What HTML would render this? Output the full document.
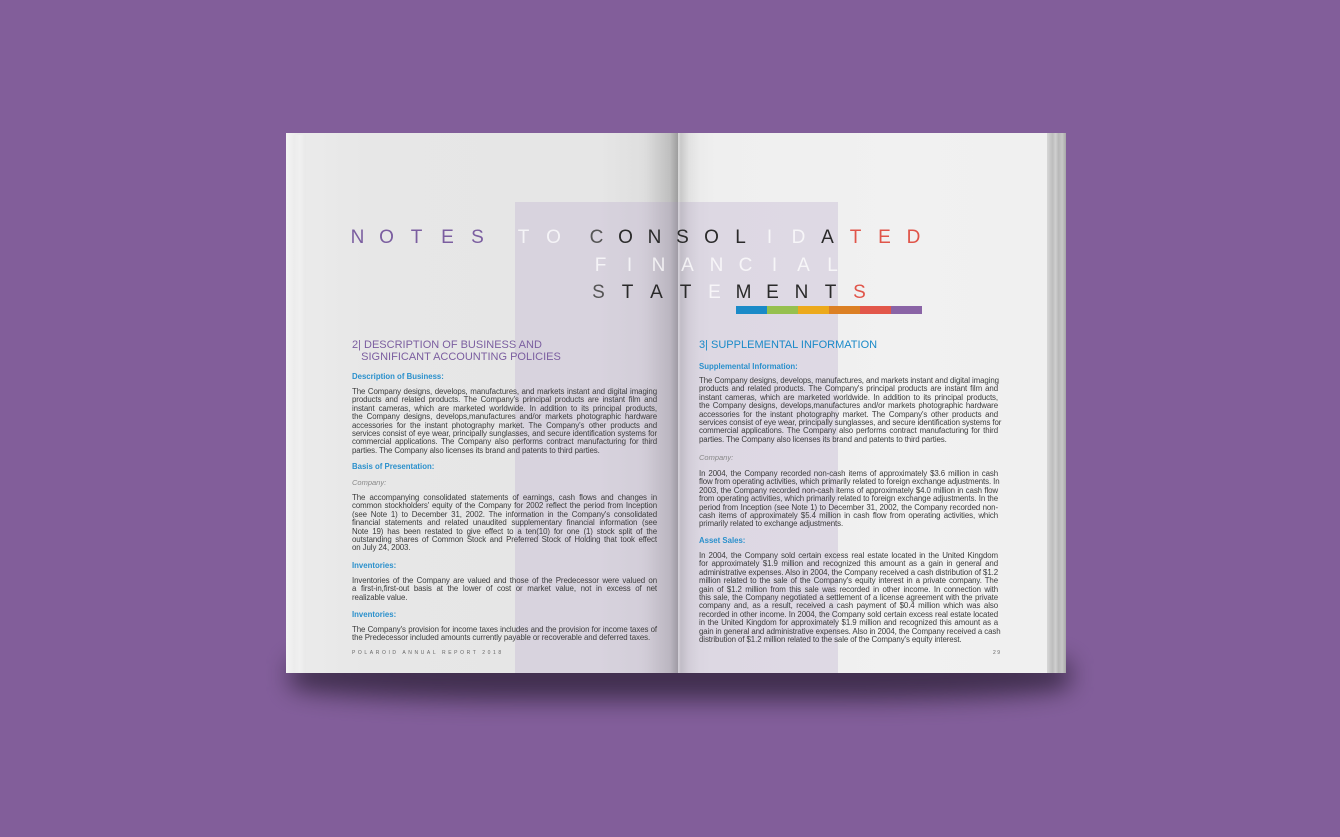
<!DOCTYPE html>
<html><head><meta charset="utf-8">
<style>
*{margin:0;padding:0;box-sizing:border-box}
html,body{width:1340px;height:837px;overflow:hidden;background:#825e9a;font-family:"Liberation Sans",sans-serif}
.abs{position:absolute}
.shadow{position:absolute;left:290px;top:650px;width:780px;height:50px;background:#3a2a47;filter:blur(12px);border-radius:30%;opacity:.9}
.lp{position:absolute;left:286px;top:133px;width:392px;height:540px;background:linear-gradient(90deg,#f3f3f3 0,#ebebeb 3%,#e7e7e7 20%,#e6e6e6 80%,#dedede 92%,#c9c9c9 98%,#b5b5b5 100%)}
.rp{position:absolute;left:678px;top:133px;width:370px;height:540px;background:linear-gradient(90deg,#cfcfcf 0,#e9e9e9 3%,#efefef 10%,#f1f1f1 60%,#f0f0f0 100%)}
.edge{position:absolute;left:1047px;top:133px;width:19px;height:540px;background:linear-gradient(90deg,#d6d6d6,#bdbdbd 30%,#d0d0d0 45%,#b8b8b8 60%,#c6c6c6 80%,#a8a8a8)}
.ledge{position:absolute;left:286px;top:135px;width:20px;height:538px;background:linear-gradient(90deg,#f5f5f5,#ececec 40%,#f0f0f0 70%,#e8e8e8)}
.band{position:absolute;left:515px;top:202px;width:323px;height:471px;background:rgba(190,175,205,.35)}
.spine{position:absolute;left:640px;top:133px;width:60px;height:540px;background:linear-gradient(90deg,rgba(0,0,0,0),rgba(0,0,0,.05) 50%,rgba(0,0,0,.13) 63%,rgba(255,255,255,.3) 64%,rgba(0,0,0,.06) 68%,rgba(0,0,0,0))}
.t{position:absolute;font-size:19px;line-height:20px;width:29px;text-align:center;letter-spacing:0}
.p{color:#7b5ea0}.k{color:#2a2a2a}.g{color:#555}.w{color:rgba(255,255,255,.75)}.r{color:#e0554a}
.l{position:absolute;font-size:7.9px;line-height:8px;color:#3c3c3c;white-space:nowrap;text-align:justify;text-align-last:justify;letter-spacing:-0.1px}
.L{left:352px;width:305px}.R{left:699px;width:299px}
.n{text-align-last:left}
.h{position:absolute;font-size:7.8px;font-weight:bold;color:#2a90cc;white-space:nowrap}
.i{position:absolute;font-size:7.5px;font-style:italic;color:#888}
</style></head><body>
<div class="shadow"></div>
<div class="lp"></div><div class="ledge"></div>
<div class="rp"></div><div class="edge"></div>
<div class="band"></div>
<div class="spine"></div>

<div class="t p" style="left:343px;top:228px">N</div>
<div class="t p" style="left:372px;top:228px">O</div>
<div class="t p" style="left:402px;top:228px">T</div>
<div class="t p" style="left:433px;top:228px">E</div>
<div class="t p" style="left:463px;top:228px">S</div>
<div class="t w" style="left:509px;top:228px">T</div>
<div class="t w" style="left:539px;top:228px">O</div>
<div class="t g" style="left:582px;top:228px">C</div>
<div class="t k" style="left:611px;top:228px">O</div>
<div class="t k" style="left:640px;top:228px">N</div>
<div class="t k" style="left:668px;top:228px">S</div>
<div class="t k" style="left:697px;top:228px">O</div>
<div class="t k" style="left:726px;top:228px">L</div>
<div class="t w" style="left:755px;top:228px">I</div>
<div class="t w" style="left:784px;top:228px">D</div>
<div class="t k" style="left:813px;top:228px">A</div>
<div class="t r" style="left:841px;top:228px">T</div>
<div class="t r" style="left:870px;top:228px">E</div>
<div class="t r" style="left:899px;top:228px">D</div>

<div class="t w" style="left:586px;top:256px">F</div>
<div class="t w" style="left:615px;top:256px">I</div>
<div class="t w" style="left:644px;top:256px">N</div>
<div class="t w" style="left:673px;top:256px">A</div>
<div class="t w" style="left:702px;top:256px">N</div>
<div class="t w" style="left:731px;top:256px">C</div>
<div class="t w" style="left:760px;top:256px">I</div>
<div class="t w" style="left:789px;top:256px">A</div>
<div class="t w" style="left:818px;top:256px">L</div>

<div class="t g" style="left:584px;top:283px">S</div>
<div class="t k" style="left:613px;top:283px">T</div>
<div class="t k" style="left:642px;top:283px">A</div>
<div class="t k" style="left:671px;top:283px">T</div>
<div class="t w" style="left:700px;top:283px">E</div>
<div class="t k" style="left:729px;top:283px">M</div>
<div class="t k" style="left:758px;top:283px">E</div>
<div class="t k" style="left:787px;top:283px">N</div>
<div class="t k" style="left:816px;top:283px">T</div>
<div class="t r" style="left:845px;top:283px">S</div>

<div class="abs" style="left:736px;top:306px;width:186px;height:8px;display:flex">
<div style="flex:1;background:#1a8ac8"></div><div style="flex:1;background:#96c04e"></div><div style="flex:1;background:#eca91b"></div><div style="flex:1;background:#dc8024"></div><div style="flex:1;background:#e2574a"></div><div style="flex:1;background:#8a64a6"></div></div>

<div class="abs" style="left:352px;top:339px;font-size:11px;color:#7b5ea0;line-height:12px">2| DESCRIPTION OF BUSINESS AND<br>&nbsp;&nbsp;&nbsp;SIGNIFICANT ACCOUNTING POLICIES</div>
<div class="h" style="left:352px;top:372px">Description of Business:</div>
<div class="l L" style="top:388px">The Company designs, develops, manufactures, and markets instant and digital imaging</div>
<div class="l L" style="top:396.4px">products and related products. The Company's principal products are instant film and</div>
<div class="l L" style="top:404.8px">instant cameras, which are marketed worldwide. In addition to its principal products,</div>
<div class="l L" style="top:413.2px">the Company designs, develops,manufactures and/or markets photographic hardware</div>
<div class="l L" style="top:421.6px">accessories for the instant photography market. The Company's other products and</div>
<div class="l L" style="top:430px">services consist of eye wear, principally sunglasses, and secure identification systems for</div>
<div class="l L" style="top:438.4px">commercial applications. The Company also performs contract manufacturing for third</div>
<div class="l L n" style="top:446.8px">parties. The Company also licenses its brand and patents to third parties.</div>
<div class="h" style="left:352px;top:462px">Basis of Presentation:</div>
<div class="i" style="left:352px;top:478px">Company:</div>
<div class="l L" style="top:494px">The accompanying consolidated statements of earnings, cash flows and changes in</div>
<div class="l L" style="top:502.4px">common stockholders' equity of the Company for 2002 reflect the period from Inception</div>
<div class="l L" style="top:510.8px">(see Note 1) to December 31, 2002. The information in the Company's consolidated</div>
<div class="l L" style="top:519.2px">financial statements and related unaudited supplementary financial information (see</div>
<div class="l L" style="top:527.6px">Note 19) has been restated to give effect to a ten(10) for one (1) stock split of the</div>
<div class="l L" style="top:536px">outstanding shares of Common Stock and Preferred Stock of Holding that took effect</div>
<div class="l L n" style="top:544.4px">on July 24, 2003.</div>
<div class="h" style="left:352px;top:561px">Inventories:</div>
<div class="l L" style="top:577px">Inventories of the Company are valued and those of the Predecessor were valued on</div>
<div class="l L" style="top:585.4px">a first-in,first-out basis at the lower of cost or market value, not in excess of net</div>
<div class="l L n" style="top:593.8px">realizable value.</div>
<div class="h" style="left:352px;top:610px">Inventories:</div>
<div class="l L" style="top:626px">The Company's provision for income taxes includes and the provision for income taxes of</div>
<div class="l L n" style="top:634.4px">the Predecessor included amounts currently payable or recoverable and deferred taxes.</div>
<div class="abs" style="left:352px;top:650px;font-size:5px;letter-spacing:2.6px;color:#666">POLAROID ANNUAL REPORT 2018</div>

<div class="abs" style="left:699px;top:339px;font-size:11px;color:#1a8ac8">3| SUPPLEMENTAL INFORMATION</div>
<div class="h" style="left:699px;top:362px">Supplemental Information:</div>
<div class="l R" style="top:377px">The Company designs, develops, manufactures, and markets instant and digital imaging</div>
<div class="l R" style="top:385.4px">products and related products. The Company's principal products are instant film and</div>
<div class="l R" style="top:393.8px">instant cameras, which are marketed worldwide. In addition to its principal products,</div>
<div class="l R" style="top:402.2px">the Company designs, develops,manufactures and/or markets photographic hardware</div>
<div class="l R" style="top:410.6px">accessories for the instant photography market. The Company's other products and</div>
<div class="l R" style="top:419px">services consist of eye wear, principally sunglasses, and secure identification systems for</div>
<div class="l R" style="top:427.4px">commercial applications. The Company also performs contract manufacturing for third</div>
<div class="l R n" style="top:435.8px">parties. The Company also licenses its brand and patents to third parties.</div>
<div class="i" style="left:699px;top:453px">Company:</div>
<div class="l R" style="top:470px">In 2004, the Company recorded non-cash items of approximately $3.6 million in cash</div>
<div class="l R" style="top:478.4px">flow from operating activities, which primarily related to foreign exchange adjustments. In</div>
<div class="l R" style="top:486.8px">2003, the Company recorded non-cash items of approximately $4.0 million in cash flow</div>
<div class="l R" style="top:495.2px">from operating activities, which primarily related to foreign exchange adjustments. In the</div>
<div class="l R" style="top:503.6px">period from Inception (see Note 1) to December 31, 2002, the Company recorded non-</div>
<div class="l R" style="top:512px">cash items of approximately $5.4 million in cash flow from operating activities, which</div>
<div class="l R n" style="top:520.4px">primarily related to exchange adjustments.</div>
<div class="h" style="left:699px;top:536px">Asset Sales:</div>
<div class="l R" style="top:552px">In 2004, the Company sold certain excess real estate located in the United Kingdom</div>
<div class="l R" style="top:560.4px">for approximately $1.9 million and recognized this amount as a gain in general and</div>
<div class="l R" style="top:568.8px">administrative expenses. Also in 2004, the Company received a cash distribution of $1.2</div>
<div class="l R" style="top:577.2px">million related to the sale of the Company's equity interest in a private company. The</div>
<div class="l R" style="top:585.6px">gain of $1.2 million from this sale was recorded in other income. In connection with</div>
<div class="l R" style="top:594px">this sale, the Company negotiated a settlement of a license agreement with the private</div>
<div class="l R" style="top:602.4px">company and, as a result, received a cash payment of $0.4 million which was also</div>
<div class="l R" style="top:610.8px">recorded in other income. In 2004, the Company sold certain excess real estate located</div>
<div class="l R" style="top:619.2px">in the United Kingdom for approximately $1.9 million and recognized this amount as a</div>
<div class="l R" style="top:627.6px">gain in general and administrative expenses. Also in 2004, the Company received a cash</div>
<div class="l R n" style="top:636px">distribution of $1.2 million related to the sale of the Company's equity interest.</div>
<div class="abs" style="left:993px;top:650px;font-size:5px;letter-spacing:1.5px;color:#666">29</div>
</body></html>
